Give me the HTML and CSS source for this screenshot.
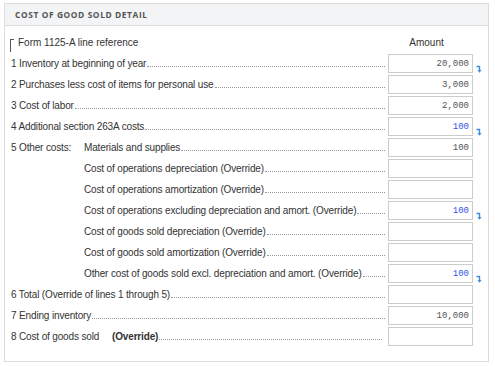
FILE: index.html
```html
<!DOCTYPE html>
<html lang="en">
  <head>
    <meta charset="UTF-8" />
    <meta name="viewport" content="width=device-width, initial-scale=1.0" />
    <title>Cost of Good Sold Detail</title>
    <link rel="stylesheet" href="styles.css">
  </head>
  <body>
    <div class="panel">
      <div class="panel-header">Cost of Good Sold Detail</div>

      <div class="panel-body">
        <!-- Column headings -->
        <div class="head-row">
          <span class="ref"><span class="corner"></span>Form 1125-A line reference</span>
          <span class="amount-head">Amount</span>
        </div>

        <div class="row">
          <span class="label">1 Inventory at beginning of year</span>
          <span class="leader"></span>
          <input class="amount" type="text" value="20,000" />
          <span class="flow"><svg width="7" height="8" viewBox="0 0 7 8"><path d="M0.5 1.5H3.5V6.5" fill="none" stroke="#3d8ddb" stroke-width="1.4"/><path d="M1.5 5H5.5L3.5 7.8Z" fill="#3d8ddb"/></svg></span>
        </div>
        <div class="row">
          <span class="label">2 Purchases less cost of items for personal use</span>
          <span class="leader"></span>
          <input class="amount" type="text" value="3,000" />
          <span class="flow"></span>
        </div>
        <div class="row">
          <span class="label">3 Cost of labor</span>
          <span class="leader"></span>
          <input class="amount" type="text" value="2,000" />
          <span class="flow"></span>
        </div>
        <div class="row">
          <span class="label">4 Additional section 263A costs</span>
          <span class="leader"></span>
          <input class="amount blue" type="text" value="100" />
          <span class="flow"><svg width="7" height="8" viewBox="0 0 7 8"><path d="M0.5 1.5H3.5V6.5" fill="none" stroke="#3d8ddb" stroke-width="1.4"/><path d="M1.5 5H5.5L3.5 7.8Z" fill="#3d8ddb"/></svg></span>
        </div>
        <div class="row">
          <span class="label"><span class="group">5 Other costs:</span>Materials and supplies</span>
          <span class="leader"></span>
          <input class="amount" type="text" value="100" />
          <span class="flow"></span>
        </div>
        <div class="row sub">
          <span class="label">Cost of operations depreciation (Override)</span>
          <span class="leader"></span>
          <input class="amount" type="text" value="" />
          <span class="flow"></span>
        </div>
        <div class="row sub">
          <span class="label">Cost of operations amortization (Override)</span>
          <span class="leader"></span>
          <input class="amount" type="text" value="" />
          <span class="flow"></span>
        </div>
        <div class="row sub">
          <span class="label">Cost of operations excluding depreciation and amort. (Override)</span>
          <span class="leader"></span>
          <input class="amount blue" type="text" value="100" />
          <span class="flow"><svg width="7" height="8" viewBox="0 0 7 8"><path d="M0.5 1.5H3.5V6.5" fill="none" stroke="#3d8ddb" stroke-width="1.4"/><path d="M1.5 5H5.5L3.5 7.8Z" fill="#3d8ddb"/></svg></span>
        </div>
        <div class="row sub">
          <span class="label">Cost of goods sold depreciation (Override)</span>
          <span class="leader"></span>
          <input class="amount" type="text" value="" />
          <span class="flow"></span>
        </div>
        <div class="row sub">
          <span class="label">Cost of goods sold amortization (Override)</span>
          <span class="leader"></span>
          <input class="amount" type="text" value="" />
          <span class="flow"></span>
        </div>
        <div class="row sub">
          <span class="label">Other cost of goods sold excl. depreciation and amort. (Override)</span>
          <span class="leader"></span>
          <input class="amount blue" type="text" value="100" />
          <span class="flow"><svg width="7" height="8" viewBox="0 0 7 8"><path d="M0.5 1.5H3.5V6.5" fill="none" stroke="#3d8ddb" stroke-width="1.4"/><path d="M1.5 5H5.5L3.5 7.8Z" fill="#3d8ddb"/></svg></span>
        </div>
        <div class="row">
          <span class="label">6 Total (Override of lines 1 through 5)</span>
          <span class="leader"></span>
          <input class="amount" type="text" value="" />
          <span class="flow"></span>
        </div>
        <div class="row">
          <span class="label">7 Ending inventory</span>
          <span class="leader"></span>
          <input class="amount" type="text" value="10,000" />
          <span class="flow"></span>
        </div>
        <div class="row">
          <span class="label"><span class="group wide">8 Cost of goods sold</span><b>(Override)</b></span>
          <span class="leader short"></span>
          <input class="amount" type="text" value="" />
          <span class="flow"></span>
        </div>
      </div>
    </div>
  </body>
</html>
```

FILE: styles.css
```css
/* Basic Styles */
body {
  margin: 0;
  padding: 0;
  background-color: #fff;
  font-family: "Liberation Sans", Arial, sans-serif;
  font-size: 10px;
  color: #333;
}

.panel {
  width: 483px;
  margin: 3px 0 0 4px;
  border: 1px solid #dcdcdc;
}

.panel-header {
  height: 21px;
  line-height: 22px;
  padding-left: 10px;
  background-color: #f3f4f6;
  border-bottom: 1px solid #dcdcdc;
  font-family: "Open Sans", sans-serif;
  font-size: 8.4px;
  font-weight: bold;
  letter-spacing: 0.6px;
  text-transform: uppercase;
  color: #555;
}

.panel-body {
  padding: 8px 4px 14px 6px;
}

/* Heading row */
.head-row {
  display: flex;
  align-items: center;
  height: 17px;
  margin-bottom: 2px;
}

.ref {
  position: relative;
  flex: 1;
  padding-left: 7px;
}

.corner {
  position: absolute;
  left: -1px;
  top: 2px;
  width: 3px;
  height: 12px;
  border-top: 1px solid #555;
  border-left: 1px solid #555;
}

.amount-head {
  width: 85px;
  text-align: center;
  padding-right: 4px;
  margin-right: 11px;
}

/* Form rows */
.row {
  display: flex;
  align-items: center;
  height: 21px;
}

.sub .label {
  padding-left: 73px;
}

.label {
  white-space: nowrap;
  letter-spacing: -0.15px;
}

.group {
  display: inline-block;
  width: 73px;
}

.group.wide {
  width: 101px;
}

.leader {
  flex: 1;
  height: 6px;
  margin: 0 3px 0 1px;
  border-bottom: 1px dotted #999;
}

.leader.short {
  margin-right: 6px;
}

.amount {
  box-sizing: border-box;
  width: 85px;
  height: 19px;
  margin: 0;
  padding: 0 3px;
  border: 1px solid #ccc;
  background: #fff;
  font-family: "Liberation Mono", "Courier New", monospace;
  font-size: 9px;
  color: #555;
  text-align: right;
}

.amount.blue {
  color: #3355ee;
}

.flow {
  width: 8px;
  height: 19px;
  padding-left: 3px;
  display: flex;
  align-items: flex-end;
}
```
